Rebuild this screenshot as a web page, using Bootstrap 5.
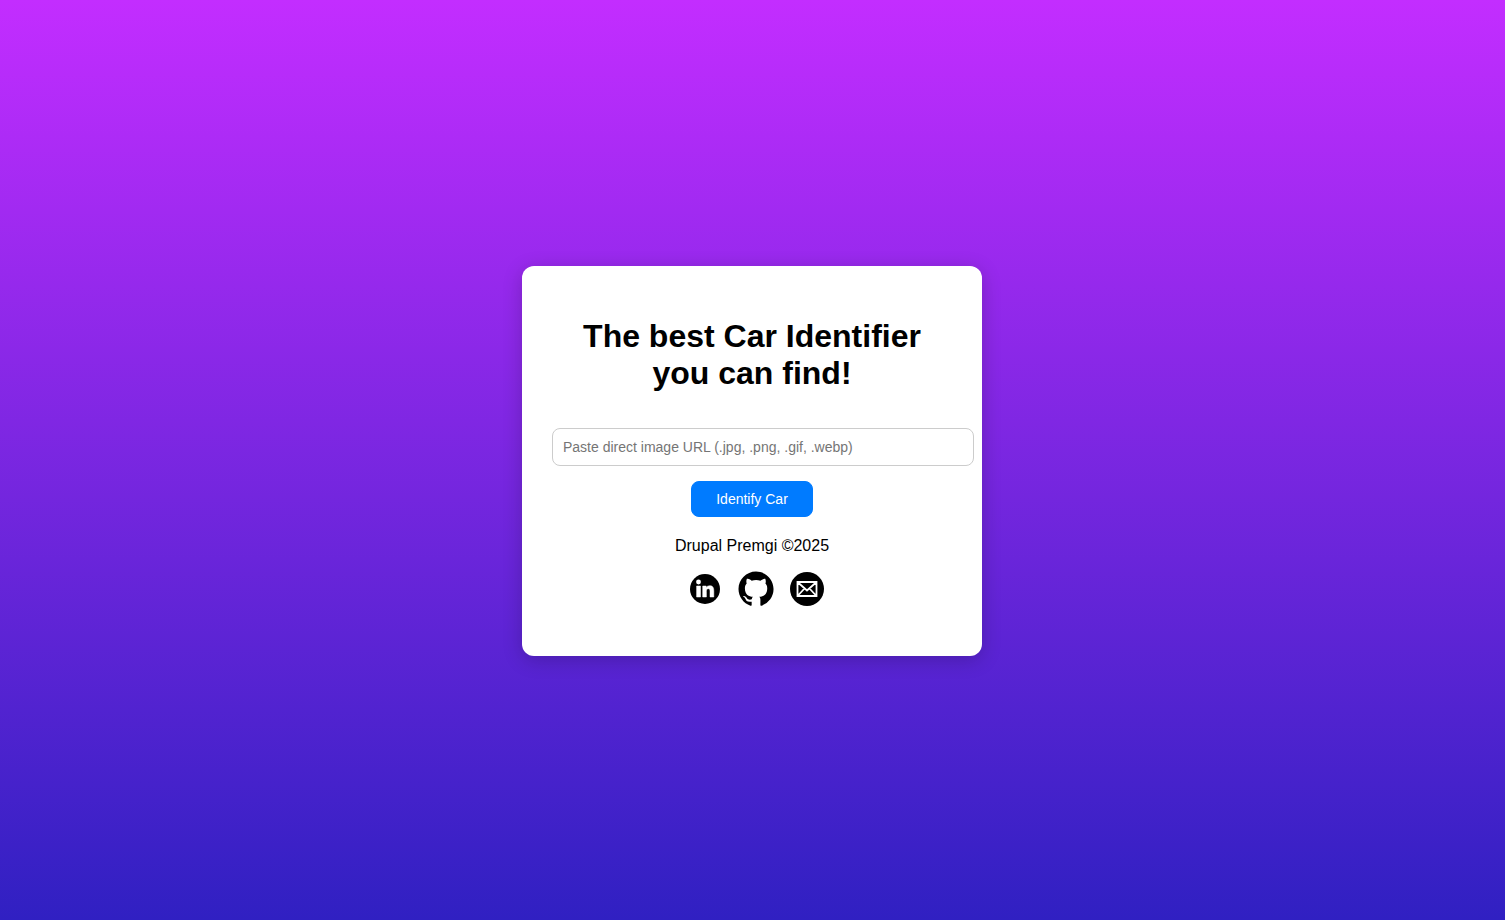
<!DOCTYPE html>
<html lang="en">
<head>
<meta charset="utf-8">
<meta name="viewport" content="width=device-width, initial-scale=1">
<title>Car Identifier</title>
<link rel="stylesheet" href="https://cdn.jsdelivr.net/npm/bootstrap@5.3.0/dist/css/bootstrap.min.css">
<style>
  body {
    padding: 2px 1px 0 0;
    background: linear-gradient(to bottom, #c32dff, #3020c2) no-repeat;
    font-family: "Liberation Sans", Arial, sans-serif;
    font-size: 16px;
    line-height: 18px;
    color: #000;
  }
  .identifier {
    width: 100%;
    max-width: 460px;
    padding: 52px 30px 47px;
    border: 0;
    border-radius: 12px;
    box-shadow: 0 4px 20px rgba(0, 0, 0, .2);
  }
  .identifier h1 {
    font-size: 32px;
    line-height: 37px;
    font-weight: 700;
    margin-bottom: 36px;
  }
  /* the field runs past the card's padding on the right */
  .url-field {
    width: auto;
    height: 38px;
    margin-right: -22px;
    padding: 10px;
    border-color: #ccc;
    border-radius: 8px;
    font-size: 14px;
  }
  .url-field::placeholder { color: #757575; }
  .identify {
    --bs-btn-bg: #007bff;
    --bs-btn-border-color: #007bff;
    --bs-btn-font-size: 14px;
    --bs-btn-line-height: 16px;
    --bs-btn-padding-x: 24px;
    --bs-btn-padding-y: 9px;
    --bs-btn-border-radius: 8px;
    margin: 15px 0 20px;
  }
  .credit { margin-bottom: 14px; }
  .socials { gap: 11px; }
  .socials svg { display: block; width: 40px; height: 40px; }
</style>
<script src="https://cdn.jsdelivr.net/npm/bootstrap@5.3.0/dist/js/bootstrap.bundle.min.js" defer></script>
</head>
<body class="d-flex align-items-center justify-content-center min-vh-100">
<main class="card identifier text-center">
  <h1>The best Car Identifier you can find!</h1>
  <form class="d-flex flex-column">
    <input class="form-control url-field" type="url" aria-label="Image URL" placeholder="Paste direct image URL (.jpg, .png, .gif, .webp)">
    <button class="btn btn-primary identify align-self-center" type="submit">Identify Car</button>
  </form>
  <footer>
    <p class="credit">Drupal Premgi ©2025</p>
    <nav class="socials d-flex justify-content-center ps-2" aria-label="Contact">
      <a href="#linkedin" aria-label="LinkedIn">
        <svg viewBox="0 0 40 40">
          <circle cx="20" cy="20" r="15"/>
          <circle cx="13.5" cy="13" r="2.4" fill="#fff"/>
          <path fill="#fff" stroke="#fff" stroke-width=".5" d="M11.6 17h3.9v11h-3.9zM17.7 17h3.5v1.5c.7-1.1 1.9-1.8 3.5-1.8 3.2 0 4.1 2 4.1 5V28H25v-5.6c0-1.6-.3-2.7-1.7-2.7s-1.9 1.1-1.9 2.7V28h-3.7z"/>
        </svg>
      </a>
      <a href="#github" aria-label="GitHub">
        <svg viewBox="0 0 40 40">
          <path transform="translate(2.5 2.6) scale(2.19)" d="M8 0C3.58 0 0 3.58 0 8c0 3.54 2.29 6.53 5.47 7.59.4.07.55-.17.55-.38 0-.19-.01-.82-.01-1.49-2.01.37-2.53-.49-2.69-.94-.09-.23-.48-.94-.82-1.13-.28-.15-.68-.52-.01-.53.63-.01 1.08.58 1.23.82.72 1.21 1.87.87 2.33.66.07-.52.28-.87.51-1.07-1.78-.2-3.64-.89-3.64-3.95 0-.87.31-1.59.82-2.15-.08-.2-.36-1.02.08-2.12 0 0 .67-.21 2.2.82a7.6 7.6 0 0 1 4 0c1.53-1.04 2.2-.82 2.2-.82.44 1.1.16 1.92.08 2.12.51.56.82 1.27.82 2.15 0 3.07-1.87 3.75-3.65 3.95.29.25.54.73.54 1.48 0 1.07-.01 1.93-.01 2.2 0 .21.15.46.55.38A8.01 8.01 0 0 0 16 8c0-4.42-3.58-8-8-8"/>
        </svg>
      </a>
      <a href="#email" aria-label="Email">
        <svg viewBox="0 0 40 40">
          <circle cx="20" cy="20" r="17"/>
          <path fill="none" stroke="#fff" stroke-width="1.8" d="M10.5 13h19v14h-19zM11 13.5l9 8 9-8M11 26.5l6.5-7M29 26.5l-6.5-7"/>
        </svg>
      </a>
    </nav>
  </footer>
</main>
</body>
</html>
